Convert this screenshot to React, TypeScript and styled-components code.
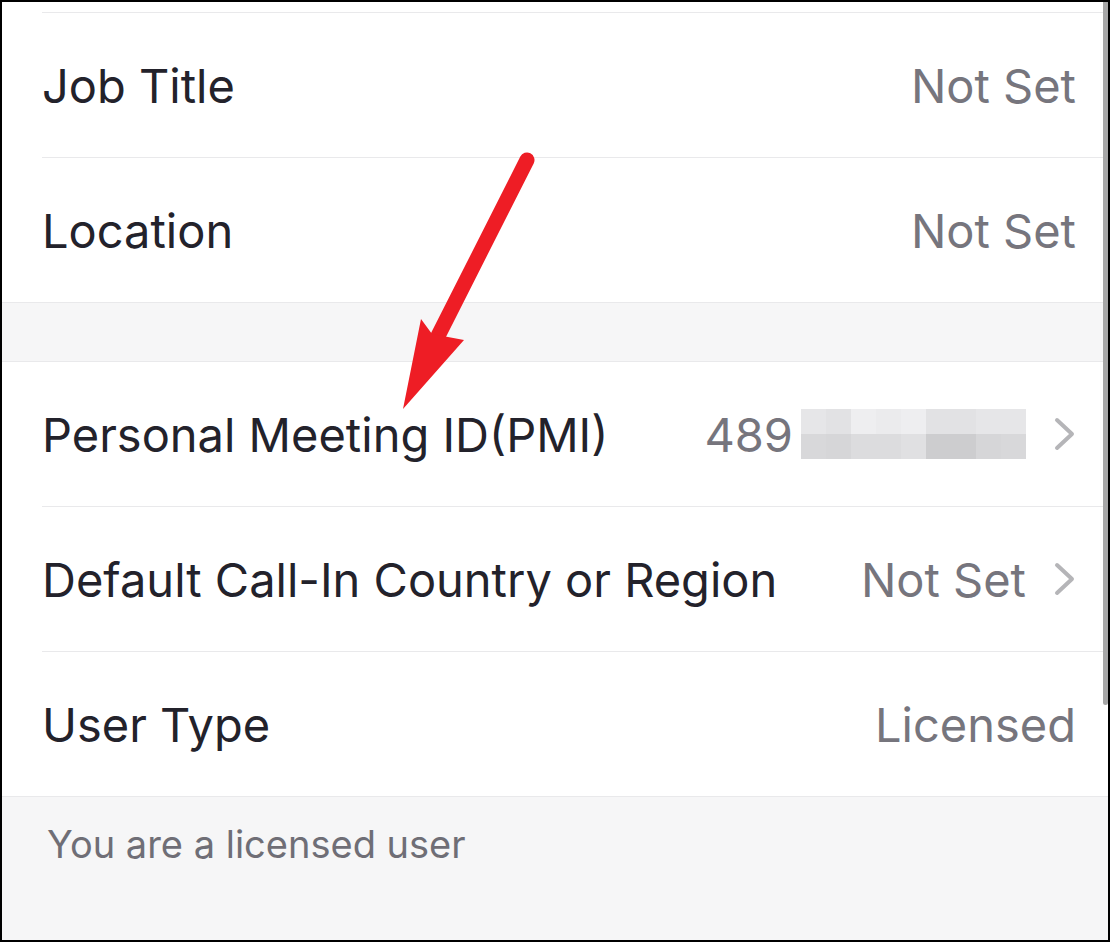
import React from 'react';
import styled, { createGlobalStyle } from 'styled-components';

const Global = createGlobalStyle`
  html, body {
    margin: 0;
    padding: 0;
    background: #fff;
  }
  * {
    box-sizing: border-box;
  }
`;

const Frame = styled.div`
  position: relative;
  width: 1110px;
  height: 942px;
  border: 2px solid #000;
  overflow: hidden;
  background: #f6f6f7;
  font-family: Inter, 'Noto Sans', sans-serif;
`;

const Group = styled.div<{ $top?: number }>`
  background: #fff;
  padding-top: ${(p) => p.$top ?? 0}px;
  border-bottom: 1px solid #e9e9eb;
`;

const Spacer = styled.div`
  height: 59px;
  border-bottom: 1px solid #e9e9eb;
`;

const Row = styled.div<{ $first?: boolean; $last?: boolean }>`
  display: flex;
  align-items: center;
  justify-content: space-between;
  height: ${(p) => (p.$first ? 146 : p.$last ? 144 : 145)}px;
  margin-left: 40px;
  padding-right: 32px;
  border-top: ${(p) => (p.$first ? '1px solid #e9e9eb' : 'none')};
  border-bottom: ${(p) => (p.$last ? 'none' : '1px solid #e9e9eb')};
`;

const Label = styled.span`
  font-size: 47px;
  color: #23222b;
`;

const Value = styled.span`
  display: flex;
  align-items: center;
  font-size: 47px;
  color: #76757d;
`;

const Chevron = styled.svg`
  width: 22px;
  height: 34px;
  margin-left: 28px;
`;

const Blur = styled.div`
  display: grid;
  grid-template-columns: repeat(9, 25px);
  grid-template-rows: repeat(2, 25px);
  margin-left: 8px;
`;

const Cell = styled.div<{ $c: string }>`
  background: ${(p) => p.$c};
`;

const Footer = styled.div`
  padding: 24px 45px;
  font-size: 38px;
  color: #6f6e76;
`;

const Scrollbar = styled.div`
  position: absolute;
  top: 0;
  right: 0;
  width: 5px;
  height: 703px;
  background: #a6a6a6;
  border-bottom-left-radius: 3px;
  border-bottom-right-radius: 3px;
`;

const Arrow = styled.svg`
  position: absolute;
  left: 0;
  top: 0;
  pointer-events: none;
`;

const cells = [
  '#e6e6e8', '#e2e2e4', '#eeeef0', '#ebebed', '#eeeef0', '#e2e2e4', '#e2e2e4', '#e6e6e8', '#e6e6e8',
  '#d8d8da', '#d6d6d8', '#dcdcde', '#dcdcde', '#e0e0e2', '#cdcdcf', '#cdcdcf', '#d6d6d8', '#d8d8da',
];

const ChevronIcon = () => (
  <Chevron viewBox="0 0 22 34">
    <path d="M3 3 L18 17 L3 31" fill="none" stroke="#b5b5b8" strokeWidth="4" strokeLinecap="round" strokeLinejoin="round" />
  </Chevron>
);

const App = () => (
  <>
    <Global />
    <Frame>
      <Group $top={10}>
        <Row $first>
          <Label>Job Title</Label>
          <Value>Not Set</Value>
        </Row>
        <Row $last>
          <Label>Location</Label>
          <Value>Not Set</Value>
        </Row>
      </Group>
      <Spacer />
      <Group>
        <Row>
          <Label>Personal Meeting ID(PMI)</Label>
          <Value>
            489
            <Blur>
              {cells.map((c, i) => (
                <Cell key={i} $c={c} />
              ))}
            </Blur>
            <ChevronIcon />
          </Value>
        </Row>
        <Row>
          <Label>Default Call-In Country or Region</Label>
          <Value>
            Not Set
            <ChevronIcon />
          </Value>
        </Row>
        <Row $last>
          <Label>User Type</Label>
          <Value>Licensed</Value>
        </Row>
      </Group>
      <Footer>You are a licensed user</Footer>
      <Scrollbar />
      <Arrow width="1110" height="942" viewBox="0 0 1110 942">
        <line x1="525" y1="158" x2="436" y2="334" stroke="#ee1d25" strokeWidth="15" strokeLinecap="round" />
        <polygon points="419,317 430,332 462,338 401,407" fill="#ee1d25" />
      </Arrow>
    </Frame>
  </>
);

export default App;
